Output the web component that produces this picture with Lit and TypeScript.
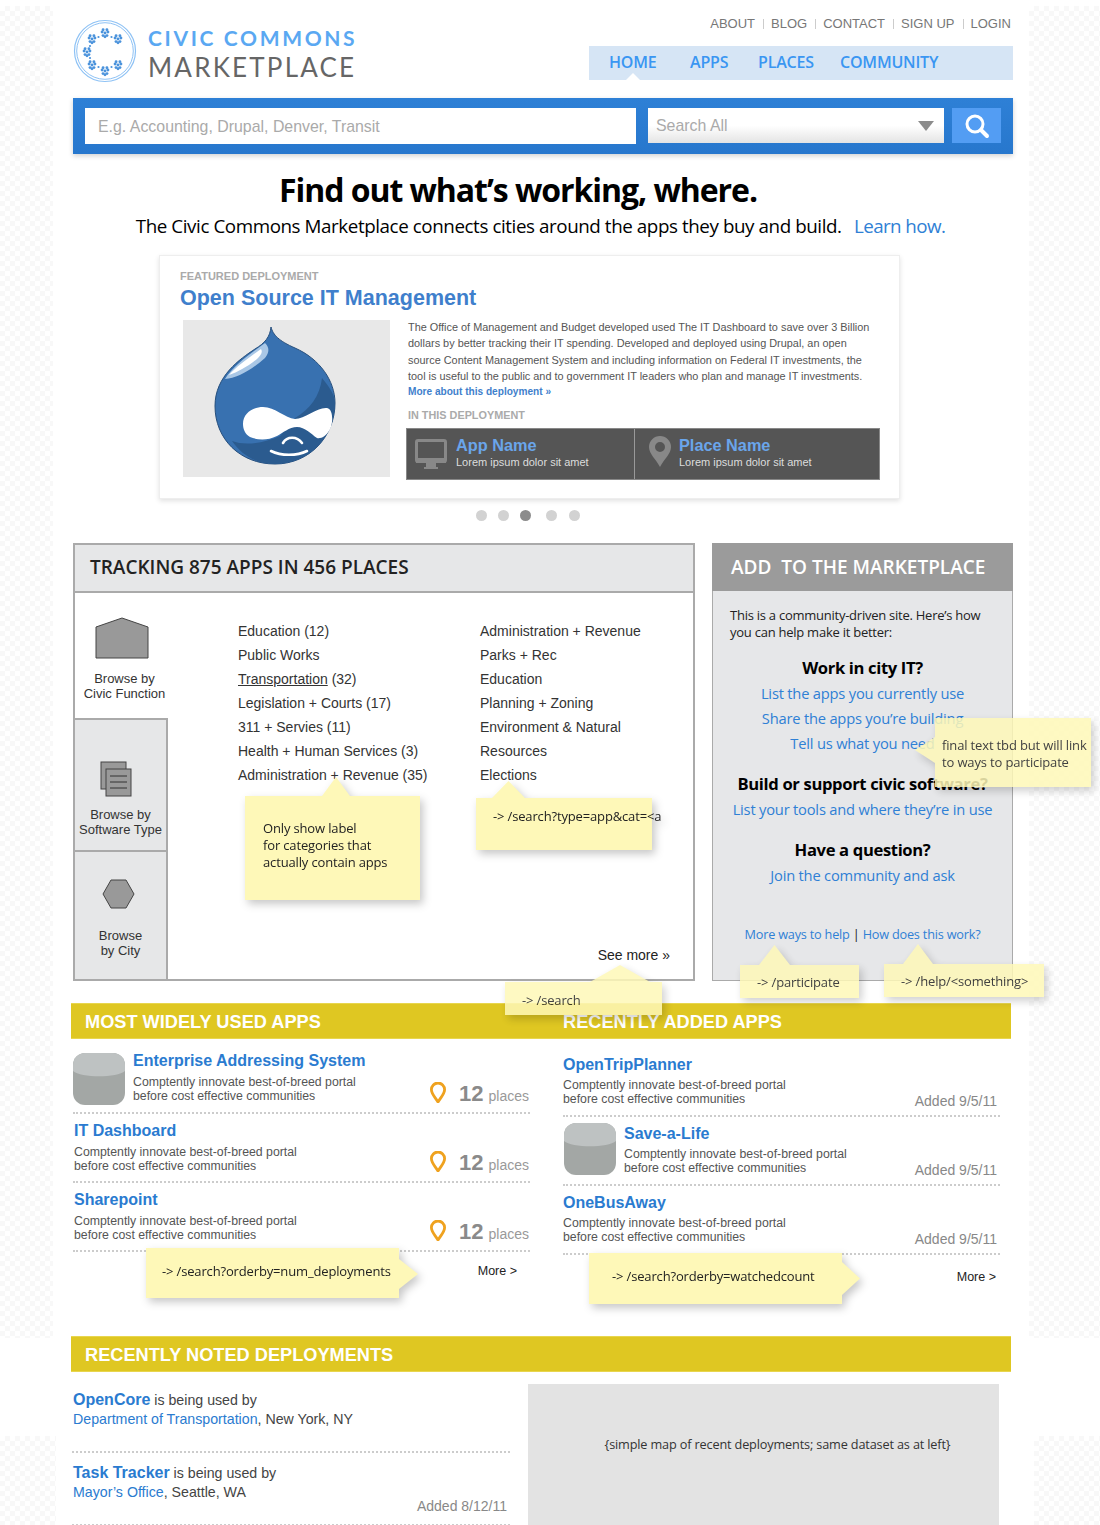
import { LitElement, html, css, svg } from 'lit';
import { customElement } from 'lit/decorators.js';

const petals = [[0, 0], [-2.9, -1], [2.9, -1], [-2, 2.6], [2, 2.6], [-1.9, -3.3], [1.9, -3.3], [0, 3.7]];
const flowers = [[35, 18], [22, 24], [48, 24], [17, 37], [22, 50], [35, 56], [48, 50]];
const specks = [[28.5, 22], [41.5, 22], [20, 31], [20, 43], [28.5, 52], [41.5, 52]];

const topLinks = ['ABOUT', 'BLOG', 'CONTACT', 'SIGN UP', 'LOGIN'];
const catsA = ['Education (12)', 'Public Works', 'Transportation', 'Legislation + Courts (17)', '311 + Servies (11)', 'Health + Human Services (3)', 'Administration + Revenue (35)'];
const catsB = ['Administration + Revenue', 'Parks + Rec', 'Education', 'Planning + Zoning', 'Environment & Natural', 'Resources', 'Elections'];
const usedApps = [
  { name: 'Enterprise Addressing System', icon: true },
  { name: 'IT Dashboard', icon: false },
  { name: 'Sharepoint', icon: false },
];
const newApps = [
  { name: 'OpenTripPlanner', icon: false },
  { name: 'Save-a-Life', icon: true },
  { name: 'OneBusAway', icon: false },
];

const cylinder = html`<svg class="cyl" viewBox="0 0 52 52">
  <rect width="52" height="52" rx="12" fill="#a3a7a5"></rect>
  <path d="M0 18V12A12 12 0 0 1 12 0H40A12 12 0 0 1 52 12V18C44 25 8 25 0 18Z" fill="#bec2c2"></path>
</svg>`;

const pin = html`<svg class="pin" viewBox="0 0 16 21">
  <path d="M8 20C5 15 1.4 12 1.4 7.6A6.6 6.6 0 0 1 14.6 7.6C14.6 12 11 15 8 20Z" fill="none" stroke="#efa21f" stroke-width="2.8"></path>
</svg>`;

const logo = html`<svg class="logo" viewBox="0 0 70 70">
  <circle cx="35" cy="36" r="30.5" fill="none" stroke="#8ec2f5" stroke-width="1.2"></circle>
  <circle cx="35" cy="36" r="28.3" fill="none" stroke="#8ec2f5" stroke-width="1"></circle>
  ${flowers.map(([x, y]) => petals.map(([dx, dy]) => svg`<circle cx="${x + dx}" cy="${y + dy}" r="1.45" fill="#4b93dc"></circle>`))}
  ${specks.map(([x, y]) => svg`<circle cx="${x}" cy="${y}" r="1.1" fill="#4b93dc"></circle>`)}
</svg>`;

const drop = html`<svg class="drop" viewBox="0 0 140 150">
  <path d="M66 6C68 14 74 20 90 27C115 38 130 60 130 82C130 115 105 143 70 143C35 143 10 118 10 85C10 55 35 38 50 28C60 22 65 16 66 6Z" fill="#3871b0" stroke="#274f7c" stroke-width="1"></path>
  <path d="M27 120C40 125 60 122 75 115L90 97C105 88 115 75 117 57C126 68 130 75 130 82C130 115 105 143 70 143C50 143 36 133 27 120Z" fill="#2b5b8f"></path>
  <path d="M20 58C28 45 45 33 60 22C65 27 64 32 60 37C45 50 32 57 20 58Z" fill="#a9c7e6"></path>
  <path d="M24 54C32 45 45 36 56 28C58 31 56 34 52 38C42 46 33 51 24 54Z" fill="#fff"></path>
  <path d="M38 103C38 92 48 86 58 86C70 86 80 97 90 98C100 98 112 86 122 87C128 88 128 100 126 106C122 116 115 118 112 117C106 113 100 106 92 106C84 106 78 112 72 115C62 120 52 119 45 116C40 113 38 108 38 103Z" fill="#fff"></path>
  <path d="M66 130C76 135 92 135 102 130" fill="none" stroke="#fff" stroke-width="2.6" stroke-linecap="round"></path>
  <path d="M78 122C82 115 92 115 97 122" fill="none" stroke="#fff" stroke-width="2.6" stroke-linecap="round"></path>
</svg>`;

@customElement('app-root')
export class AppRoot extends LitElement {
  static styles = css`
    :host {
      display: block;
      width: 1100px;
      height: 1525px;
      overflow: hidden;
      position: relative;
      background: #fff;
      font-family: "Liberation Sans", Arial, sans-serif;
      color: #333;
    }
    a { color: inherit; text-decoration: none; }
    svg { display: block; }

    .strip {
      position: absolute;
      background: repeating-conic-gradient(#f8f8f8 0 25%, #fff 0 50%) 0 0 / 10px 10px;
    }
    .s1 { left: 0; top: 6px; width: 53px; height: 1332px; }
    .s2 { left: 1029px; top: 6px; width: 71px; height: 1332px; }
    .s3 { left: 0; top: 1436px; width: 56px; height: 89px; }
    .s4 { left: 1034px; top: 1436px; width: 66px; height: 89px; }

    .wrap { position: relative; margin-left: 73px; width: 940px; }

    /* header */
    .head { height: 98px; display: flex; justify-content: space-between; }
    .brand { display: flex; gap: 8px; padding-top: 15px; margin-left: -3px; }
    .logo { width: 70px; height: 70px; }
    .brand-text { padding-top: 10px; }
    .civic {
      font: 700 21px/26px Lato, sans-serif;
      letter-spacing: 2.65px;
      color: #5aa8f2;
    }
    .market {
      font: 400 26px/32px Lato, sans-serif;
      letter-spacing: 2.2px;
      color: #666;
    }
    .head-right { width: 424px; display: flex; flex-direction: column; }
    .top-links {
      height: 46px;
      padding: 16px 2px 0 0;
      box-sizing: border-box;
      display: flex;
      justify-content: flex-end;
      font-size: 13px;
      line-height: 16px;
      color: #777;
    }
    .top-links span + span { margin-left: 8px; padding-left: 8px; background: linear-gradient(#ccc, #ccc) 0 3px / 1px 10px no-repeat; }
    .nav {
      position: relative;
      height: 34px;
      background: #d6e5f5;
      font: 600 16px/32px "Open Sans", sans-serif;
      color: #3a96f2;
      display: flex;
      padding-left: 20px;
      letter-spacing: -0.2px;
    }
    .nav a:nth-child(1) { width: 81px; }
    .nav a:nth-child(2) { width: 68px; }
    .nav a:nth-child(3) { width: 82px; }
    .nav::after {
      content: "";
      position: absolute;
      left: 37px;
      bottom: 0;
      width: 14px;
      height: 7px;
      background: #fff;
      clip-path: polygon(50% 0, 100% 100%, 0 100%);
    }

    /* search */
    .search {
      height: 56px;
      box-sizing: border-box;
      padding: 10px 12px 10px 12px;
      background: linear-gradient(#2e80d6, #2777cd);
      box-shadow: 0 2px 5px rgba(0, 0, 0, 0.18);
      display: flex;
      font-size: 15.9px;
      color: #aaa;
    }
    .query {
      width: 551px;
      height: 36px;
      background: #fff;
      padding-left: 13px;
      box-sizing: border-box;
      line-height: 38px;
    }
    .scope {
      margin-left: 12px;
      width: 296px;
      height: 35px;
      box-sizing: border-box;
      padding: 1px 10px 0 8px;
      line-height: 34px;
      background: linear-gradient(#fff 50%, #e4e4e4);
      display: flex;
      justify-content: space-between;
      align-items: center;
    }
    .caret { width: 16px; height: 10px; background: #8c8c8c; clip-path: polygon(0 0, 100% 0, 50% 100%); }
    .go {
      margin-left: 8px;
      width: 49px;
      height: 35px;
      background: #539df3;
      display: flex;
      align-items: center;
      justify-content: center;
    }
    .go svg { width: 26px; height: 26px; }

    /* hero */
    .hero { height: 101px; text-align: center; color: #000; font-family: "Open Sans", sans-serif; }
    .hero h1 {
      margin: 0;
      padding: 13px 50px 0 0;
      font-size: 32px;
      line-height: 45px;
      font-weight: 700;
      letter-spacing: -1.05px;
    }
    .hero p {
      margin: 0;
      padding-right: 5px;
      font-size: 18.8px;
      line-height: 28px;
      letter-spacing: -0.42px;
    }
    .hero a { color: #2f80d5; margin-left: 8px; letter-spacing: -0.6px; }

    /* featured */
    .card {
      margin-left: 86px;
      width: 741px;
      height: 244px;
      box-sizing: border-box;
      background: #fff;
      border: 1px solid #eee;
      box-shadow: 0 2px 5px rgba(0, 0, 0, 0.12);
      padding: 13px 0 0 20px;
    }
    .eyebrow { font-size: 11px; font-weight: 700; color: #aaa; line-height: 14px; }
    .card h2 {
      margin: 0 0 6px;
      font-size: 21.5px;
      line-height: 30px;
      font-weight: 700;
      color: #3f7fcc;
      white-space: nowrap;
    }
    .card-body { display: flex; padding-left: 3px; }
    .shot { width: 207px; height: 157px; margin-top: 1px; background: #e8e8e8; padding: 1px 0 0 22px; box-sizing: border-box; }
    .drop { width: 140px; height: 150px; }
    .card-text { margin-left: 18px; width: 490px; font-size: 10.9px; line-height: 16.3px; color: #555; }
    .more { font-size: 10.1px; font-weight: 700; color: #3f7fcc; display: block; }
    .in-this { margin: 9px 0 6px; line-height: 13px; font-size: 10.85px; font-weight: 700; color: #aaa; }
    .bar {
      margin-left: -2px;
      width: 474px;
      height: 52px;
      background: #555;
      display: flex;
      color: #ddd;
      outline: 1px solid #888;
      outline-offset: -1px;
    }
    .cell { display: flex; box-sizing: border-box; width: 228px; padding: 7px 0 0 9px; }
    .cell + .cell { width: 246px; border-left: 1px solid #999; padding-left: 14px; }
    .cell b { display: block; font-size: 16.3px; line-height: 20px; color: #6aa5ea; }
    .cell span { display: block; font-size: 11px; line-height: 15px; }
    .monitor { width: 32px; height: 32px; margin: 4px 9px 0 0; }
    .cell-pin { width: 22px; height: 32px; margin: 1px 8px 0 0; }

    .dots { height: 44px; padding: 11px 0 0 403px; box-sizing: border-box; display: flex; }
    .dots i { width: 11px; height: 11px; border-radius: 50%; background: #d2d2d2; margin-right: 11px; }
    .dots i.on { background: #8c8c8c; margin-right: 15px; }
    .dots i:nth-child(4) { margin-right: 12px; }

    /* browse + add */
    .split { display: flex; gap: 17px; height: 438px; }
    .browse {
      width: 622px;
      box-sizing: border-box;
      border: 2px solid #aaa;
      display: flex;
      flex-direction: column;
    }
    .browse-head {
      height: 48px;
      box-sizing: border-box;
      background: #e6e7e8;
      border-bottom: 2px solid #aaa;
      padding-left: 15px;
      font: 600 19px/44px "Open Sans", sans-serif;
      color: #222;
      flex: none;
    }
    .browse-body { flex: 1; display: flex; }
    .tabs { width: 93px; flex: none; display: flex; flex-direction: column; }
    .tab {
      box-sizing: border-box;
      font-size: 13px;
      line-height: 15px;
      text-align: center;
      color: #333;
      background: #e6e7e8;
      border-right: 2px solid #aaa;
      border-top: 2px solid #aaa;
      display: flex;
      flex-direction: column;
      align-items: center;
    }
    .tab.t1 { height: 125px; background: #fff; border: 0; padding: 24px 0 0 6px; }
    .tab.t2 { height: 132px; padding-top: 41px; }
    .tab.t3 { flex: 1; padding-top: 27px; }
    .tab.t1 svg { width: 54px; height: 42px; margin: 0 6px 12px 0; }
    .tab.t2 svg { width: 32px; height: 36px; margin: 0 9px 10px 0; }
    .tab.t3 svg { width: 33px; height: 30px; margin: 0 5px 19px 0; }
    .browse-main { flex: 1; min-width: 0; display: flex; flex-direction: column; padding: 26px 23px 16px 70px; }
    .cols { display: flex; font-size: 14px; line-height: 24px; color: #333; white-space: nowrap; }
    .cols div:first-child { width: 242px; flex: none; }
    .cols u { text-decoration: underline; }
    .see-more { margin-top: auto; text-align: right; font-size: 14px; line-height: 16px; color: #222; }

    .add {
      width: 301px;
      box-sizing: border-box;
      background: #e6e7e9;
      border: 1px solid #aaa;
      border-top: 0;
      display: flex;
      flex-direction: column;
      font-family: "Open Sans", sans-serif;
      text-align: center;
      color: #000;
    }
    .add-head {
      height: 48px;
      background: #9b9b9b;
      color: #fff;
      text-align: left;
      padding-left: 19px;
      font-weight: 600;
      font-size: 19px;
      line-height: 48px;
      white-space: pre;
      margin: 0 -1px;
    }
    .add-body { flex: 1; display: flex; flex-direction: column; padding: 16px 0 37px; }
    .intro { text-align: left; padding-left: 17px; font-size: 13px; line-height: 17px; letter-spacing: -0.25px; color: #222; margin-bottom: 15px; }
    .add h3 { margin: 0; font-size: 16.6px; line-height: 24px; font-weight: 700; letter-spacing: -0.35px; }
    .add h3 + a { margin-top: 1px; }
    .add a.big { display: block; font-size: 14.7px; line-height: 25px; color: #2f80d5; letter-spacing: -0.2px; }
    .add h3.gap1 { margin-top: 16px; }
    .add h3.gap2 { margin-top: 16px; }
    .foot { margin-top: auto; font-size: 12.7px; line-height: 18px; color: #222; letter-spacing: -0.2px; }
    .foot a { color: #2f80d5; }

    /* lists */
    .section { margin-left: -2px; width: 940px; }
    .band {
      height: 36px;
      box-sizing: border-box;
      background: #dfc722;
      border-top: 1px solid #e8d64e;
      border-bottom: 1px solid #e8d64e;
      color: #fff;
      font-size: 18.2px;
      font-weight: 700;
      line-height: 36px;
      padding-left: 14px;
      display: flex;
    }
    .band span:first-child { width: 478px; }
    .apps { margin-top: 22px; height: 333px; }
    .app-cols { display: flex; }
    .app-col { margin-left: 2px; width: 457px; padding-top: 6px; }
    .app-col + .app-col { margin-left: 33px; width: 437px; padding-top: 9px; }
    .row {
      height: 69px;
      box-sizing: border-box;
      border-bottom: 2px dotted #ccc;
      display: flex;
      gap: 8px;
      padding: 7px 0 0 1px;
      position: relative;
    }
    .app-col:first-child .row:first-child { padding-top: 6px; }
    .app-col + .app-col .row { padding-left: 0; }
    .cyl { width: 52px; height: 52px; flex: none; margin: 2px 0 0 -1px; }
    .app-col + .app-col .cyl { margin: -1px 0 0 1px; }
    .row-text { flex: 1; }
    .row-text b { display: block; font-size: 16px; line-height: 20px; color: #2a7bd0; }
    .row-text p { margin: 4px 0 0; font-size: 12.3px; line-height: 14.3px; color: #555; white-space: nowrap; }
    .app-col + .app-col .row-text p { margin-top: 3px; }
    .places { align-self: flex-end; display: flex; align-items: baseline; padding: 0 1px 5px 0; color: #999; font-size: 14px; }
    .places b { font-size: 22px; line-height: 26px; color: #8a8a8a; margin-right: 5px; font-weight: 700; }
    .pin { width: 16px; height: 21px; align-self: flex-end; margin: 0 5px 9px 0; }
    .added { align-self: flex-end; padding: 0 3px 6px 0; font-size: 14px; line-height: 16px; color: #888; }
    .row-more { font-size: 12.5px; line-height: 16px; color: #222; text-align: right; padding-right: 13px; margin-top: 11px; }
    .app-col + .app-col .row-more { padding-right: 4px; margin-top: 14px; }

    /* deployments */
    .deploy-grid { display: flex; }
    .deploy-list { margin: 8px 0 0 1px; width: 438px; }
    .dep {
      height: 73px;
      box-sizing: border-box;
      border-bottom: 2px dotted #ccc;
      padding: 10px 3px 0 1px;
      display: flex;
      flex-direction: column;
      font-size: 14.2px;
      line-height: 19px;
      color: #444;
    }
    .dep b { font-size: 16px; color: #2a7bd0; }
    .dep a { color: #2a7bd0; }
    .dep .date { margin-top: -4px; text-align: right; font-size: 14px; line-height: 16px; color: #888; }
    .map {
      margin: 12px 0 0 18px;
      width: 471px;
      height: 142px;
      box-sizing: border-box;
      background: #e3e3e3;
      padding: 51px 0 0 28px;
      text-align: center;
      font: 12.7px/18px "Open Sans", sans-serif;
      letter-spacing: -0.15px;
      color: #333;
    }

    /* sticky notes */
    .note {
      position: absolute;
      box-sizing: border-box;
      background: #fef8b8;
      filter: drop-shadow(3px 4px 4px rgba(0, 0, 0, 0.22));
      font: 13px/17px "Open Sans", sans-serif;
      letter-spacing: -0.15px;
      color: #222;
      white-space: nowrap;
    }
    .note::before { content: ""; position: absolute; background: #fef8b8; }
    .n-label { left: 245px; top: 796px; width: 175px; height: 104px; padding: 24px 0 0 18px; }
    .n-label::before { left: 77px; top: -19px; width: 28px; height: 19px; clip-path: polygon(50% 0, 100% 100%, 0 100%); }
    .n-type { left: 476px; top: 798px; width: 176px; height: 52px; padding: 10px 0 0 17px; }
    .n-type::before { left: 16px; top: -17px; width: 33px; height: 17px; clip-path: polygon(50% 0, 100% 100%, 0 100%); }
    .n-final { left: 935px; top: 718px; width: 156px; height: 69px; padding: 19px 0 0 7px; opacity: 0.85; }
    .n-final::before { left: -20px; top: 19px; width: 20px; height: 26px; clip-path: polygon(0 50%, 100% 0, 100% 100%); }
    .n-part { left: 740px; top: 965px; width: 119px; height: 33px; padding: 9px 0 0 17px; opacity: 0.85; }
    .n-part::before { left: 19px; top: -20px; width: 31px; height: 20px; clip-path: polygon(50% 0, 100% 100%, 0 100%); }
    .n-help { left: 884px; top: 964px; width: 160px; height: 33px; padding: 9px 0 0 17px; opacity: 0.85; }
    .n-help::before { left: 19px; top: -20px; width: 30px; height: 20px; clip-path: polygon(50% 0, 100% 100%, 0 100%); }
    .n-search { left: 505px; top: 982px; width: 157px; height: 33px; padding: 10px 0 0 17px; opacity: 0.85; }
    .n-search::before { left: 85px; top: -17px; width: 60px; height: 17px; clip-path: polygon(50% 0, 100% 100%, 0 100%); }
    .n-num { left: 146px; top: 1248px; width: 253px; height: 50px; padding: 15px 0 0 16px; }
    .n-num::before { right: -19px; top: 11px; width: 19px; height: 30px; clip-path: polygon(0 0, 100% 50%, 0 100%); }
    .n-watch { left: 589px; top: 1253px; width: 253px; height: 51px; padding: 15px 0 0 23px; }
    .n-watch::before { right: -18px; top: 9px; width: 18px; height: 33px; clip-path: polygon(0 0, 100% 50%, 0 100%); }
  `;

  renderRow(a: { name: string; icon: boolean }, right: unknown) {
    return html`<div class="row">
      ${a.icon ? cylinder : ''}
      <div class="row-text">
        <b>${a.name}</b>
        <p>Comptently innovate best-of-breed portal<br />before cost effective communities</p>
      </div>
      ${right}
    </div>`;
  }

  render() {
    return html`
      <div class="strip s1"></div>
      <div class="strip s2"></div>
      <div class="strip s3"></div>
      <div class="strip s4"></div>

      <div class="wrap">
        <header class="head">
          <div class="brand">
            ${logo}
            <div class="brand-text">
              <div class="civic">CIVIC COMMONS</div>
              <div class="market">MARKETPLACE</div>
            </div>
          </div>
          <div class="head-right">
            <div class="top-links">${topLinks.map(l => html`<span>${l}</span>`)}</div>
            <nav class="nav">
              <a>HOME</a><a>APPS</a><a>PLACES</a><a>COMMUNITY</a>
            </nav>
          </div>
        </header>

        <div class="search">
          <div class="query">E.g. Accounting, Drupal, Denver, Transit</div>
          <div class="scope">Search All<i class="caret"></i></div>
          <div class="go">
            <svg viewBox="0 0 26 26">
              <circle cx="11" cy="11" r="8" fill="none" stroke="#fff" stroke-width="3"></circle>
              <path d="M17 17L23 23" stroke="#fff" stroke-width="4" stroke-linecap="round"></path>
            </svg>
          </div>
        </div>

        <section class="hero">
          <h1>Find out what’s working, where.</h1>
          <p>The Civic Commons Marketplace connects cities around the apps they buy and build. <a>Learn how.</a></p>
        </section>

        <section class="card">
          <div class="eyebrow">FEATURED DEPLOYMENT</div>
          <h2>Open Source IT Management</h2>
          <div class="card-body">
            <div class="shot">${drop}</div>
            <div class="card-text">
              The Office of Management and Budget developed used The IT Dashboard to save over 3 Billion<br />
              dollars by better tracking their IT spending. Developed and deployed using Drupal, an open<br />
              source Content Management System and including information on Federal IT investments, the<br />
              tool is useful to the public and to government IT leaders who plan and manage IT investments.
              <a class="more">More about this deployment »</a>
              <div class="in-this">IN THIS DEPLOYMENT</div>
              <div class="bar">
                <div class="cell">
                  <svg class="monitor" viewBox="0 0 32 32">
                    <rect x="1.5" y="1.5" width="29" height="21" rx="1.5" fill="none" stroke="#888" stroke-width="3"></rect>
                    <rect x="1" y="19" width="30" height="5" fill="#888"></rect>
                    <rect x="11" y="24" width="10" height="4" fill="#888"></rect>
                    <rect x="9" y="28" width="14" height="2" fill="#888"></rect>
                  </svg>
                  <div><b>App Name</b><span>Lorem ipsum dolor sit amet</span></div>
                </div>
                <div class="cell">
                  <svg class="cell-pin" viewBox="0 0 22 32">
                    <path fill-rule="evenodd" d="M11 31C7 23 0 18 0 11A11 11 0 0 1 22 11C22 18 15 23 11 31ZM11 6A5 5 0 1 0 11 16A5 5 0 1 0 11 6Z" fill="#888"></path>
                  </svg>
                  <div><b>Place Name</b><span>Lorem ipsum dolor sit amet</span></div>
                </div>
              </div>
            </div>
          </div>
        </section>
        <div class="dots"><i></i><i></i><i class="on"></i><i></i><i></i></div>

        <div class="split">
          <section class="browse">
            <div class="browse-head">TRACKING 875 APPS IN 456 PLACES</div>
            <div class="browse-body">
              <div class="tabs">
                <div class="tab t1">
                  <svg viewBox="0 0 54 42"><path d="M1 10L27 1L53 10V41H1Z" fill="#999" stroke="#444"></path></svg>
                  Browse by<br />Civic Function
                </div>
                <div class="tab t2">
                  <svg viewBox="0 0 32 36">
                    <rect x="1" y="1" width="25" height="27" fill="#999" stroke="#444"></rect>
                    <rect x="6" y="8" width="25" height="27" fill="#999" stroke="#444"></rect>
                    <path d="M10 15H27M10 21H27M10 27H27" stroke="#333"></path>
                  </svg>
                  Browse by<br />Software Type
                </div>
                <div class="tab t3">
                  <svg viewBox="0 0 33 30"><path d="M9 1H24L32 15L24 29H9L1 15Z" fill="#999" stroke="#444"></path></svg>
                  Browse<br />by City
                </div>
              </div>
              <div class="browse-main">
                <div class="cols">
                  <div>${catsA.map(c => c === 'Transportation' ? html`<u>${c}</u> (32)<br />` : html`${c}<br />`)}</div>
                  <div>${catsB.map(c => html`${c}<br />`)}</div>
                </div>
                <div class="see-more">See more »</div>
              </div>
            </div>
          </section>

          <section class="add">
            <div class="add-head">ADD  TO THE MARKETPLACE</div>
            <div class="add-body">
              <div class="intro">This is a community-driven site. Here’s how<br />you can help make it better:</div>
              <h3>Work in city IT?</h3>
              <a class="big">List the apps you currently use</a>
              <a class="big">Share the apps you’re building</a>
              <a class="big">Tell us what you need</a>
              <h3 class="gap1">Build or support civic software?</h3>
              <a class="big">List your tools and where they’re in use</a>
              <h3 class="gap2">Have a question?</h3>
              <a class="big">Join the community and ask</a>
              <div class="foot"><a>More ways to help</a> | <a>How does this work?</a></div>
            </div>
          </section>
        </div>

        <section class="section apps">
          <div class="band"><span>MOST WIDELY USED APPS</span><span>RECENTLY ADDED APPS</span></div>
          <div class="app-cols">
            <div class="app-col">
              ${usedApps.map(a => this.renderRow(a, html`${pin}<div class="places"><b>12</b>places</div>`))}
              <div class="row-more">More &gt;</div>
            </div>
            <div class="app-col">
              ${newApps.map(a => this.renderRow(a, html`<div class="added">Added 9/5/11</div>`))}
              <div class="row-more">More &gt;</div>
            </div>
          </div>
        </section>

        <section class="section">
          <div class="band"><span>RECENTLY NOTED DEPLOYMENTS</span></div>
          <div class="deploy-grid">
            <div class="deploy-list">
              <div class="dep">
                <div><b>OpenCore</b> is being used by</div>
                <div><a>Department of Transportation</a>, New York, NY</div>
              </div>
              <div class="dep">
                <div><b>Task Tracker</b> is being used by</div>
                <div><a>Mayor’s Office</a>, Seattle, WA</div>
                <div class="date">Added 8/12/11</div>
              </div>
            </div>
            <div class="map">{simple map of recent deployments; same dataset as at left}</div>
          </div>
        </section>
      </div>

      <div class="note n-label">Only show label<br />for categories that<br />actually contain apps</div>
      <div class="note n-type">-&gt; /search?type=app&amp;cat=&lt;a</div>
      <div class="note n-final">final text tbd but will link<br />to ways to participate</div>
      <div class="note n-part">-&gt; /participate</div>
      <div class="note n-help">-&gt; /help/&lt;something&gt;</div>
      <div class="note n-search">-&gt; /search</div>
      <div class="note n-num">-&gt; /search?orderby=num_deployments</div>
      <div class="note n-watch">-&gt; /search?orderby=watchedcount</div>
    `;
  }
}
